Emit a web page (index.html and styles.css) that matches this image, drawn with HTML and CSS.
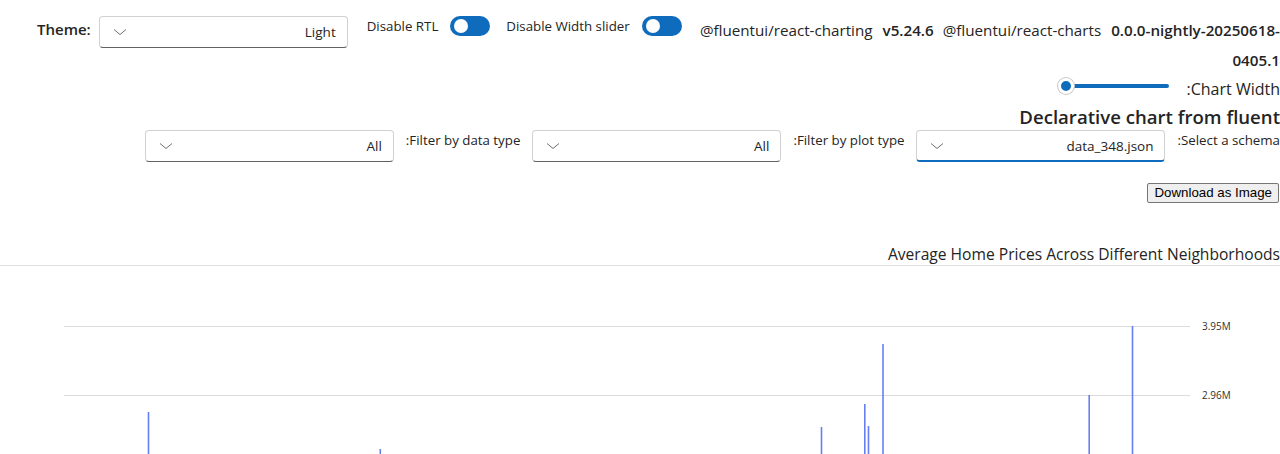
FILE: index.html
```html
<!DOCTYPE html>
<html lang="en">
<head>
<meta charset="utf-8">
<title>Declarative chart</title>
<link rel="stylesheet" href="styles.css">
</head>
<body>
<div class="top-row">
  <div class="theme-group">
    <span class="theme-label">Theme:</span>
    <div class="dropdown theme-dd">
      <svg class="chev" width="14" height="8" viewBox="0 0 14 8"><path d="M1 1.5 L7 6.5 L13 1.5" fill="none" stroke="#707070" stroke-width="1"/></svg>
      <span class="dd-value">Light</span>
    </div>
  </div>
  <div class="toggle-group">
    <span class="toggle-label">Disable RTL</span>
    <span class="toggle"><span class="knob"></span></span>
  </div>
  <div class="toggle-group">
    <span class="toggle-label">Disable Width slider</span>
    <span class="toggle"><span class="knob"></span></span>
  </div>
  <div class="versions">
    <span class="pkg">@fluentui/react-charting</span><b class="ver">v5.24.6</b><span class="pkg">@fluentui/react-charts</span><b class="ver last">0.0.0-nightly-20250618-0405.1</b>
  </div>
</div>

<div class="rtl-section" dir="rtl">
  <div class="slider-row">
    <span class="slider-label">Chart Width:</span>
    <div class="slider">
      <span class="slider-track"></span>
      <span class="slider-thumb"></span>
    </div>
  </div>
  <h2 class="heading">Declarative chart from fluent</h2>
  <div class="filter-row">
    <span class="filter-label">Select a schema:</span>
    <div class="dropdown focused">
      <span class="dd-value" dir="ltr">data_348.json</span>
      <svg class="chev" width="14" height="8" viewBox="0 0 14 8"><path d="M1 1.5 L7 6.5 L13 1.5" fill="none" stroke="#707070" stroke-width="1"/></svg>
    </div>
    <span class="filter-label">Filter by plot type:</span>
    <div class="dropdown">
      <span class="dd-value">All</span>
      <svg class="chev" width="14" height="8" viewBox="0 0 14 8"><path d="M1 1.5 L7 6.5 L13 1.5" fill="none" stroke="#707070" stroke-width="1"/></svg>
    </div>
    <span class="filter-label">Filter by data type:</span>
    <div class="dropdown">
      <span class="dd-value">All</span>
      <svg class="chev" width="14" height="8" viewBox="0 0 14 8"><path d="M1 1.5 L7 6.5 L13 1.5" fill="none" stroke="#707070" stroke-width="1"/></svg>
    </div>
  </div>
  <div class="download-row">
    <button class="download-btn">Download as Image</button>
  </div>
  <div class="chart-title">Average Home Prices Across Different Neighborhoods</div>
</div>

<div class="chart">
  <svg width="1280" height="188" viewBox="0 0 1280 188">
    <line x1="64" y1="60.5" x2="1190" y2="60.5" stroke="#dcdcdc" stroke-width="1"/>
    <line x1="64" y1="129.5" x2="1190" y2="129.5" stroke="#dcdcdc" stroke-width="1"/>
    <text x="1202" y="64" class="axis-text">3.95M</text>
    <text x="1202" y="133" class="axis-text">2.96M</text>
    <g stroke="#6680f0" stroke-width="1.6">
      <line x1="148.5" y1="146" x2="148.5" y2="188"/>
      <line x1="380.3" y1="183" x2="380.3" y2="188"/>
      <line x1="821.5" y1="161" x2="821.5" y2="188"/>
      <line x1="864.8" y1="138" x2="864.8" y2="188"/>
      <line x1="868.5" y1="160" x2="868.5" y2="188"/>
      <line x1="883" y1="78" x2="883" y2="188"/>
      <line x1="1089.2" y1="129" x2="1089.2" y2="188"/>
      <line x1="1132.5" y1="60" x2="1132.5" y2="188"/>
    </g>
  </svg>
</div>
</body>
</html>
```

FILE: styles.css
```css
* { box-sizing: border-box; }
body {
  margin: 0;
  font-family: "Segoe UI", "Open Sans", "Noto Sans", sans-serif;
  color: #242424;
  background: #ffffff;
  overflow: hidden;
}
.top-row {
  display: flex;
  align-items: flex-start;
  padding-top: 16px;
  padding-left: 37px;
  height: 76px;
}
.theme-group {
  display: flex;
  align-items: flex-start;
  gap: 8px;
}
.theme-label {
  font-size: 15px;
  font-weight: 600;
  line-height: 20px;
  padding-top: 3px;
}
.dropdown {
  display: flex;
  align-items: center;
  justify-content: space-between;
  width: 249px;
  height: 32px;
  border: 1px solid #d1d1d1;
  border-bottom-color: #616161;
  border-radius: 4px;
  padding: 0 11px 0 13px;
  background: #fff;
  font-size: 13.5px;
  flex: none;
}
.dropdown .chev { flex: none; }
.dropdown.focused {
  border-bottom: 2px solid #0f6cbd;
}
.dd-value { color: #242424; }
.toggle-group {
  display: flex;
  align-items: center;
  height: 20px;
  margin-left: 19px;
  gap: 12px;
}
.toggle-group + .toggle-group { margin-left: 16px; }
.toggle-label {
  font-size: 13.3px;
  color: #242424;
}
.toggle {
  position: relative;
  width: 40px;
  height: 20px;
  border-radius: 10px;
  background: #0f6cbd;
  flex: none;
}
.toggle .knob {
  position: absolute;
  left: 4px;
  top: 3px;
  width: 14px;
  height: 14px;
  border-radius: 50%;
  background: #fff;
}
.versions {
  flex: 1;
  margin-left: 10px;
  margin-top: -1px;
  font-size: 15.2px;
  line-height: 30px;
  text-align: right;
}
.versions .ver { font-weight: 600; margin: 0 9px 0 10px; }
.versions .ver.last { margin-right: 0; margin-left: 10px; }
.slider-row {
  display: flex;
  align-items: flex-start;
  height: 27px;
  gap: 14px;
}
.slider-label {
  font-size: 16px;
  line-height: 20px;
  margin-top: 3px;
}
.slider {
  position: relative;
  width: 115px;
  height: 20px;
}
.slider-track {
  position: absolute;
  right: 4px;
  left: 8px;
  top: 8px;
  height: 4px;
  border-radius: 2px;
  background: #0f6cbd;
}
.slider-thumb {
  position: absolute;
  left: 0;
  top: 2px;
  width: 16px;
  height: 16px;
  border-radius: 50%;
  background: #0f6cbd;
  border: 3px solid #fff;
  box-shadow: 0 0 0 1px #c8c8c8;
}
.heading {
  margin: 0;
  font-size: 18.6px;
  font-weight: 600;
  line-height: 26px;
  padding-top: 1px;
}
.filter-row {
  display: flex;
  align-items: flex-start;
  gap: 12px;
  height: 53px;
}
.filter-label {
  font-size: 13.3px;
  line-height: 20px;
  flex: none;
}
.download-row {
  display: flex;
  padding-right: 1px;
}
.download-btn {
  font-family: "Liberation Sans", Arial, sans-serif;
  font-size: 13.3px;
  padding: 1px 6px;
  height: 20px;
  line-height: 16px;
  color: #000;
  background: #efefef;
  border: 1px solid #767676;
  border-radius: 2px;
}
.chart-title {
  margin-top: 41px;
  font-size: 15.6px;
  line-height: 20px;
  padding-bottom: 1px;
  border-bottom: 1px solid #e0e0e0;
}
.chart svg { display: block; }
.axis-text {
  font-family: "Segoe UI", "Open Sans", "Noto Sans", sans-serif;
  font-size: 10px;
  fill: #323130;
}
```
